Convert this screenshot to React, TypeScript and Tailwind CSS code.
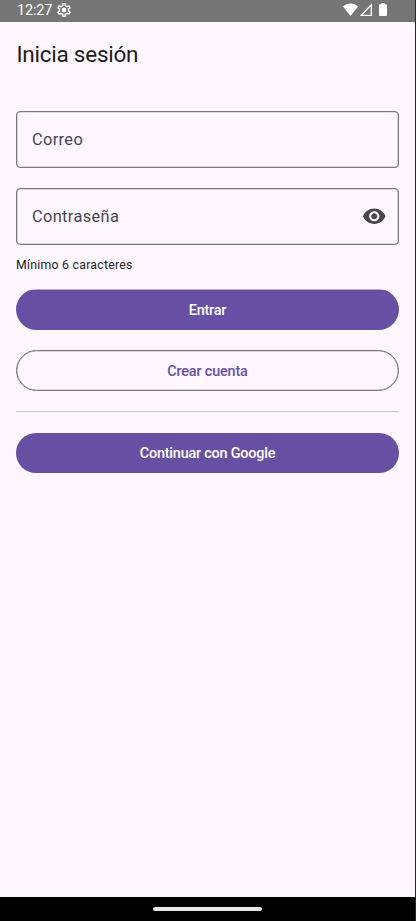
import React from "react";

function StatusBar() {
  return (
    <header className="flex h-[22px] shrink-0 items-start justify-between bg-[#757575] pl-[17px] pr-[28.500px] text-white">
      <div className="flex items-start gap-[4.500px]">
        <span className="pt-px text-[14.4px] leading-[20px] tracking-[-0.15px]">12:27</span>
        <svg className="mt-[3px] h-[14px] w-[14px]" viewBox="2 2 20 20" fill="currentColor">
          <path d="M19.43 12.98c.04-.32.07-.64.07-.98 0-.34-.03-.66-.07-.98l2.11-1.65c.19-.15.24-.42.12-.64l-2-3.46c-.09-.16-.26-.25-.44-.25-.06 0-.12.01-.17.03l-2.49 1c-.52-.4-1.08-.73-1.69-.98l-.38-2.65C14.46 2.18 14.25 2 14 2h-4c-.25 0-.46.18-.49.42l-.38 2.65c-.61.25-1.17.59-1.69.98l-2.49-1c-.06-.02-.12-.03-.18-.03-.17 0-.34.09-.43.25l-2 3.46c-.13.22-.07.49.12.64l2.110 1.650c-.04.32-.07.65-.07.98 0 .33.03.66.07.98l-2.110 1.650c-.19.15-.24.42-.12.64l2 3.460c.09.16.26.25.44.25.06 0 .12-.01.17-.03l2.490-1c.52.4 1.080.73 1.690.98l.38 2.650c.03.24.24.42.49.42h4c.25 0 .46-.18.49-.42l.38-2.650c.61-.25 1.170-.59 1.690-.98l2.490 1c.06.02.12.03.18.03.17 0 .34-.09.43-.25l2-3.460c.12-.22.07-.49-.12-.64l-2.110-1.650zm-1.980-1.710c.04.31.05.52.05.73 0 .21-.02.43-.05.73l-.14 1.130.89.7 1.080.84-.7 1.210-1.270-.51-1.040-.42-.9.68c-.43.32-.84.56-1.250.73l-1.060.43-.16 1.130-.2 1.350h-1.400l-.19-1.350-.16-1.130-1.060-.43c-.43-.18-.83-.41-1.230-.71l-.91-.7-1.060.43-1.270.51-.7-1.210 1.080-.84.89-.7-.14-1.130c-.03-.31-.05-.54-.05-.74s.02-.43.05-.73l.14-1.130-.89-.7-1.080-.84.7-1.210 1.270.51 1.040.42.9-.68c.43-.32.84-.56 1.250-.73l1.060-.43.16-1.130.2-1.350h1.390l.19 1.350.16 1.130 1.060.43c.43.18.83.41 1.230.71l.91.7 1.060-.43 1.270-.51.7 1.210-1.070.85-.89.7.14 1.130z" />
          <circle cx="12" cy="12" r="3.400" />
        </svg>
      </div>
      <div className="flex pt-[3px]">
        <svg className="h-[13px] w-[15px]" viewBox="0 0 15 13" fill="currentColor">
          <path d="M0 3.400C4.300-.5 10.700-.5 15 3.400L7.500 13z" />
        </svg>
        <svg className="ml-[2px] h-[13px] w-[12px]" viewBox="0 0 12 13" fill="none" stroke="currentColor" strokeWidth="1.300">
          <path d="M11.300 1.800v10.600H1.300z" />
        </svg>
        <svg className="ml-[7px] h-[13px] w-[8px]" viewBox="0 0 8 13" fill="currentColor">
          <path d="M2.400 0h3.200v1.300H7a1 1 0 0 1 1 1V12a1 1 0 0 1-1 1H1a1 1 0 0 1-1-1V2.300a1 1 0 0 1 1-1h1.400z" />
        </svg>
      </div>
    </header>
  );
}

function EyeIcon() {
  return (
    <svg className="h-[24.500px] w-[24.500px]" viewBox="0 0 24 24" fill="#49454f">
      <path d="M12 4.500C7 4.500 2.730 7.610 1 12c1.730 4.390 6 7.500 11 7.500s9.270-3.110 11-7.500c-1.730-4.390-6-7.500-11-7.500zM12 17c-2.760 0-5-2.240-5-5s2.240-5 5-5 5 2.240 5 5-2.240 5-5 5zm0-8c-1.660 0-3 1.340-3 3s1.340 3 3 3 3-1.340 3-3-1.340-3-3-3z" />
    </svg>
  );
}

function Field({ label, children }: { label: string; children?: React.ReactNode }) {
  return (
    <div className="flex h-[56.500px] items-center justify-between rounded-[4px] border border-[#79747e] pl-[15px] pr-[11.500px] text-[16.400px] tracking-[0.35px] text-[#49454f] shadow-[inset_0_0_0_0.300px_#79747e]">
      <span className="pt-[2px]">{label}</span>
      {children}
    </div>
  );
}

export default function App() {
  return (
    <div className="flex h-[921px] w-[416px] flex-col overflow-hidden border-r border-[#25262b] bg-[#fef7ff] font-['Roboto',sans-serif]">
      <StatusBar />
      <main className="flex flex-1 flex-col px-[16px] pt-[16px]">
        <h1 className="pl-[0.500px] text-[22.500px] leading-[32px] tracking-[-0.25px] text-[#1d1b20]">Inicia sesión</h1>
        <form className="mt-[41px] flex flex-col">
          <Field label="Correo" />
          <div className="mt-[20.500px]">
            <Field label="Contraseña">
              <EyeIcon />
            </Field>
          </div>
          <p className="mt-[12.500px] text-[12.300px] leading-[16px] tracking-[0.24px] text-[#1d1b20]">Mínimo 6 caracteres</p>
          <button type="button" className="mt-[16px] h-[41px] rounded-full bg-linear-to-b from-[#b5a8d3] from-[1px] to-[#6750a4] to-[1px] pt-[2px] text-[14.400px] font-medium tracking-[-0.2px] text-white">
            Entrar
          </button>
          <button type="button" className="mt-[20px] h-[41px] rounded-full border border-[#79747e] pt-[2px] text-[14.400px] font-medium tracking-[-0.15px] text-[#6750a4] shadow-[inset_0_0_0_0.300px_#79747e]">
            Crear cuenta
          </button>
          <hr className="mt-[20px] border-[#cac4d0]" />
          <button type="button" className="mt-[21px] h-[40px] rounded-full bg-[#6750a4] pt-[2px] text-[14.400px] font-medium tracking-[-0.2px] text-white">
            Continuar con Google
          </button>
        </form>
      </main>
      <footer className="flex h-[24px] shrink-0 items-center justify-center bg-black">
        <div className="h-[4px] w-[109px] rounded-full bg-[#e8e8e8]" />
      </footer>
    </div>
  );
}
